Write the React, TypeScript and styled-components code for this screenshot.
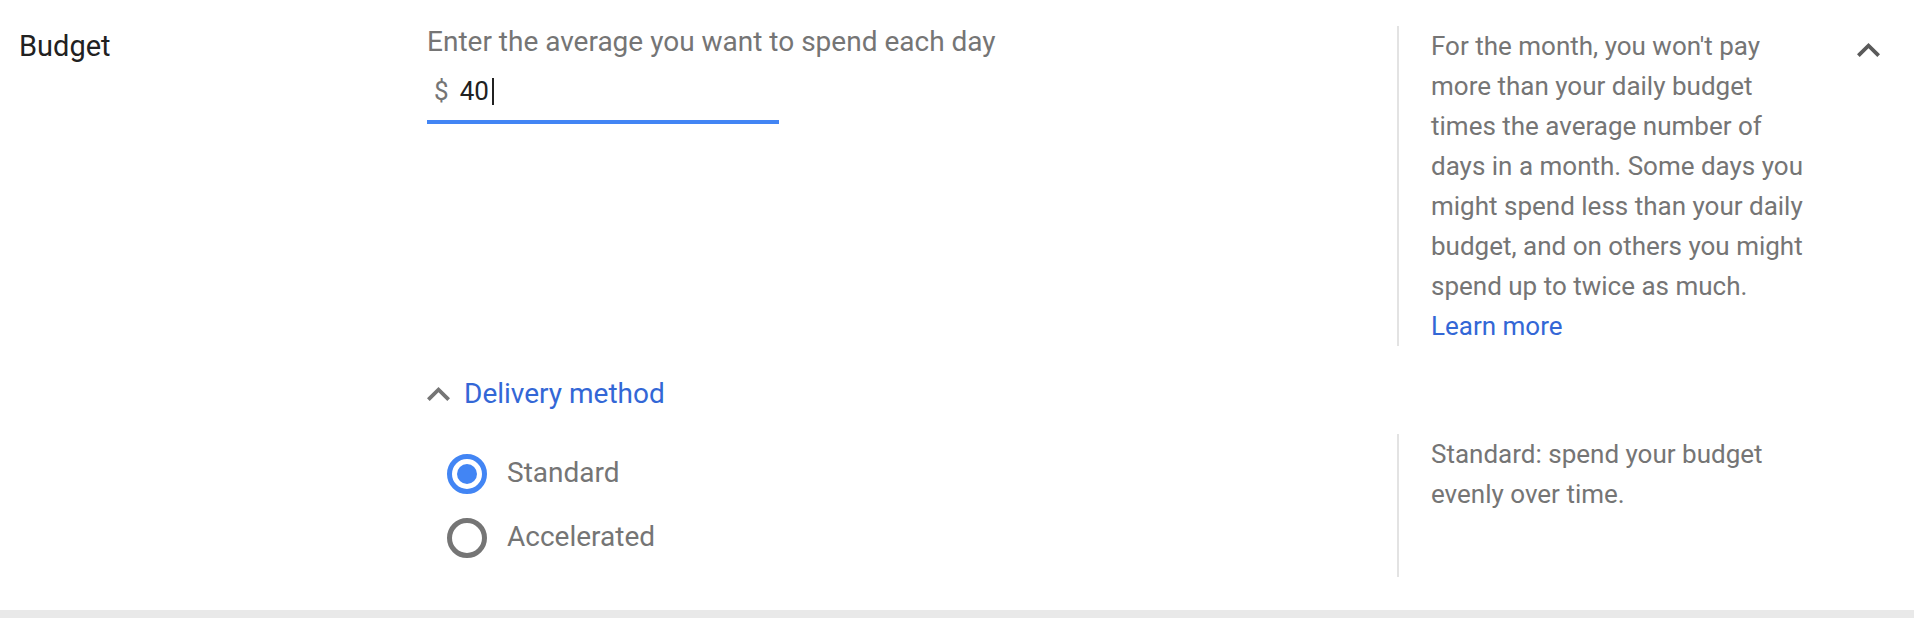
import React from "react";
import styled, { createGlobalStyle } from "styled-components";

const GlobalStyle = createGlobalStyle`
  html, body {
    margin: 0;
    padding: 0;
    background: #e9e9e9;
    font-family: Roboto, "Noto Sans", "Liberation Sans", sans-serif;
  }
  * { box-sizing: border-box; }
`;

const Card = styled.section`
  width: 1914px;
  height: 610px;
  background: #ffffff;
  box-shadow: 0 1px 2px rgba(0, 0, 0, 0.38), 0 3px 6px rgba(0, 0, 0, 0.12);
  display: grid;
  grid-template-columns: 427px 970px 1fr;
  grid-template-rows: auto auto auto;
  padding: 26px 0 33px 0;
  align-content: start;
`;

const Label = styled.div`
  grid-column: 1;
  grid-row: 1;
  padding-left: 19px;
  font-size: 29px;
  line-height: 40px;
  color: #212121;
`;

const InputArea = styled.div`
  grid-column: 2;
  grid-row: 1;
  display: flex;
  flex-direction: column;
  align-items: flex-start;
`;

const Helper = styled.div`
  font-size: 28px;
  line-height: 32px;
  color: #757575;
`;

const Field = styled.div`
  width: 352px;
  padding: 13px 0 9px 7px;
  border-bottom: 4px solid #4285f4;
  display: flex;
  align-items: baseline;
  font-size: 26px;
  line-height: 40px;
`;

const Prefix = styled.span`
  color: #757575;
`;

const Value = styled.span`
  color: #212121;
  margin-left: 11px;
`;

const Caret = styled.span`
  display: inline-block;
  width: 2px;
  height: 27px;
  margin-left: 3px;
  background: #212121;
  align-self: center;
`;

const HelpPanel = styled.aside<{ $row: number }>`
  grid-column: 3;
  grid-row: ${(p) => p.$row};
  border-left: 2px solid #e3e3e3;
  padding-left: 32px;
  display: flex;
  justify-content: space-between;
  align-items: flex-start;
`;

const HelpText = styled.p`
  margin: 0;
  width: 378px;
  font-size: 26px;
  line-height: 40px;
  color: #757575;
`;

const Link = styled.a`
  color: #3367d6;
  text-decoration: none;
  cursor: pointer;
`;

const CollapseButton = styled.button`
  border: none;
  background: transparent;
  padding: 0;
  margin: 17px 34px 0 0;
  width: 23px;
  height: 14px;
  display: flex;
  cursor: pointer;
`;

const DeliveryToggle = styled.button`
  grid-column: 2;
  grid-row: 2;
  justify-self: start;
  margin-top: 28px;
  border: none;
  background: transparent;
  padding: 0;
  display: flex;
  align-items: center;
  gap: 14px;
  font-family: inherit;
  font-size: 28px;
  line-height: 40px;
  color: #3367d6;
  cursor: pointer;
`;

const ChevronIcon = styled.svg<{ $color: string }>`
  width: 23px;
  height: 14px;
  fill: ${(p) => p.$color};
  flex: none;
`;

const RadioGroup = styled.div`
  grid-column: 2;
  grid-row: 3;
  margin-top: 20px;
  padding: 8px 0 7px 20px;
  display: flex;
  flex-direction: column;
`;

const RadioRow = styled.label`
  height: 64px;
  display: flex;
  align-items: center;
  gap: 20px;
  cursor: pointer;
`;

const RadioCircle = styled.span<{ $checked: boolean }>`
  width: 40px;
  height: 40px;
  border-radius: 50%;
  border: 5px solid ${(p) => (p.$checked ? "#4285f4" : "#757575")};
  display: flex;
  align-items: center;
  justify-content: center;
  flex: none;
  &::after {
    content: "";
    width: 20px;
    height: 20px;
    border-radius: 50%;
    background: #4285f4;
    display: ${(p) => (p.$checked ? "block" : "none")};
  }
`;

const RadioText = styled.span`
  font-size: 28px;
  line-height: 40px;
  color: #757575;
  margin-bottom: 3px;
`;

const LowerHelp = styled(HelpPanel)`
  margin-top: 20px;
`;

const Chevron = ({ color }: { color: string }) => (
  <ChevronIcon $color={color} viewBox="6 8 12 7.41" preserveAspectRatio="none">
    <path d="M7.41 15.41L12 10.83l4.59 4.58L18 14l-6-6-6 6z" />
  </ChevronIcon>
);

export default function App() {
  const options = [
    { id: "standard", label: "Standard", checked: true },
    { id: "accelerated", label: "Accelerated", checked: false },
  ];
  return (
    <>
      <GlobalStyle />
      <Card>
        <Label>Budget</Label>
        <InputArea>
          <Helper>Enter the average you want to spend each day</Helper>
          <Field>
            <Prefix>$</Prefix>
            <Value>40</Value>
            <Caret />
          </Field>
        </InputArea>
        <HelpPanel $row={1}>
          <HelpText>
            For the month, you won't pay more than your daily budget times the
            average number of days in a month. Some days you might spend less
            than your daily budget, and on others you might spend up to twice
            as much.
            <br />
            <Link>Learn more</Link>
          </HelpText>
          <CollapseButton aria-label="Collapse">
            <Chevron color="#5a5a5a" />
          </CollapseButton>
        </HelpPanel>
        <DeliveryToggle>
          <Chevron color="#757575" />
          Delivery method
        </DeliveryToggle>
        <RadioGroup>
          {options.map((o) => (
            <RadioRow key={o.id}>
              <RadioCircle $checked={o.checked} />
              <RadioText>{o.label}</RadioText>
            </RadioRow>
          ))}
        </RadioGroup>
        <LowerHelp $row={3}>
          <HelpText>Standard: spend your budget evenly over time.</HelpText>
        </LowerHelp>
      </Card>
    </>
  );
}
